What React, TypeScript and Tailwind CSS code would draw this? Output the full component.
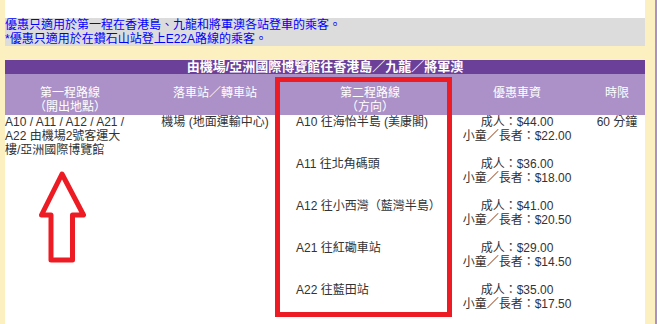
export default function App() {
  const routes = [
    { name: "A10 往海怡半島 (美康閣)", adult: "$44.00", child: "$22.00" },
    { name: "A11 往北角碼頭", adult: "$36.00", child: "$18.00" },
    { name: "A12 往小西灣（藍灣半島）", adult: "$41.00", child: "$20.50" },
    { name: "A21 往紅磡車站", adult: "$29.00", child: "$14.50" },
    { name: "A22 往藍田站", adult: "$35.00", child: "$17.50" },
  ];

  return (
    <div className="flex h-[324px] w-[657px] overflow-hidden bg-[#fdf0c0] font-['Liberation_Sans','Noto_Sans_CJK_TC',sans-serif] text-[12px] leading-[14px]">
      <div className="w-[5px] shrink-0" />

      <div className="w-[640px] shrink-0">
        {/* tail of the row above, cut off by the window */}
        <div className="h-[18px] overflow-hidden bg-white text-[#333]">
          <p className="-mt-[12px] pl-[545px]">$15.00</p>
        </div>

        <div className="h-[28px] bg-[#dcdcdc] text-[#0000ff]">
          <p>優惠只適用於第一程在香港島、九龍和將軍澳各站登車的乘客。</p>
          <p>*優惠只適用於在鑽石山站登上E22A路線的乘客。</p>
        </div>

        <div className="h-[14px]" />

        <div className="relative">
          <div className="h-[14px] bg-[#6b4098] text-center text-[13px] font-bold text-white">
            由機場/亞洲國際博覽館往香港島／九龍／將軍澳
          </div>

          <div className="grid h-[41px] grid-cols-[130px_160px_150px_144px_56px] items-end bg-[#ab91c7] pb-[1px] text-center text-white">
            <div>
              <p>第一程路線</p>
              <p>（開出地點）</p>
            </div>
            <p className="pb-[14px]">落車站／轉車站</p>
            <div>
              <p>第二程路線</p>
              <p>（方向）</p>
            </div>
            <p className="pb-[14px]">優惠車資</p>
            <p className="pb-[14px]">時限</p>
          </div>

          <div className="grid h-[220px] grid-cols-[130px_160px_150px_144px_56px] bg-white text-[#333]">
            <p className="pr-[5px]">A10 / A11 / A12 / A21 / A22 由機場2號客運大樓/亞洲國際博覽館</p>
            <p className="text-center">機場 (地面運輸中心)</p>
            <div>
              {routes.map((r) => (
                <p key={r.name} className="h-[42px] pl-[1px]">
                  {r.name}
                </p>
              ))}
            </div>
            <div className="text-center">
              {routes.map((r) => (
                <div key={r.name} className="h-[42px]">
                  <p>成人：{r.adult}</p>
                  <p>小童／長者：{r.child}</p>
                </div>
              ))}
            </div>
            <p className="text-center">60 分鐘</p>
          </div>

          {/* red highlight box */}
          <div className="absolute left-[270px] top-[17px] h-[240px] w-[177px] border-[5px] border-[#ed1c24]" />

          {/* red arrow */}
          <svg className="absolute left-[33px] top-[110px]" width="50" height="96" viewBox="0 0 50 96">
            <path
              d="M24 4 L45.5 45 L34.5 45 L34.5 90 L13 90 L13 45 L3.5 45 Z"
              fill="none"
              stroke="#ed1c24"
              strokeWidth="5"
              strokeLinejoin="round"
            />
          </svg>
        </div>
      </div>

      <div className="w-[10px] shrink-0" />
      <div className="w-[2px] shrink-0 bg-[#ab91c7]" />
    </div>
  );
}
